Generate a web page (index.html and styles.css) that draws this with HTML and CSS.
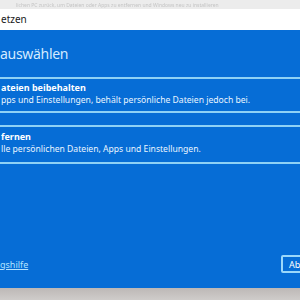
FILE: index.html
```html
<!DOCTYPE html>
<html lang="de">
<head>
  <meta charset="UTF-8" />
  <meta name="viewport" content="width=device-width, initial-scale=1.0" />
  <title>Diesen PC zurücksetzen</title>
  <link rel="stylesheet" href="styles.css">
</head>
<body>
  <div class="backdrop">
    <span>lichen PC zurück, um Dateien oder Apps zu entfernen und Windows neu zu installieren</span>
  </div>

  <div class="titlebar">etzen</div>

  <div class="dialog">
    <h1 class="heading">auswählen</h1>

    <div class="option">
      <div class="option-title">ateien beibehalten</div>
      <div class="option-text">pps und Einstellungen, behält persönliche Dateien jedoch bei.</div>
    </div>

    <div class="option">
      <div class="option-title">fernen</div>
      <div class="option-text">lle persönlichen Dateien, Apps und Einstellungen.</div>
    </div>

    <div class="dialog-footer">
      <a class="help-link" href="#">gshilfe</a>
      <button class="btn">Ab</button>
    </div>
  </div>

  <div class="desk"></div>
</body>
</html>
```

FILE: styles.css
```css
* {
  margin: 0;
  padding: 0;
  box-sizing: border-box;
}

body {
  font-family: 'Noto Sans', 'Open Sans', sans-serif;
  width: 300px;
  height: 300px;
  overflow: hidden;
  display: flex;
  flex-direction: column;
  background: #c6c2c0;
}

/* blurred window behind the dialog */
.backdrop {
  height: 9px;
  background: #ececec;
  overflow: hidden;
  white-space: nowrap;
  font-size: 5px;
  line-height: 6px;
  color: #c4c4c4;
  filter: blur(0.5px);
}

.backdrop span {
  display: block;
  margin-top: 2px;
  padding-left: 16px;
}

.titlebar {
  height: 21px;
  background: #fff;
  font-size: 10px;
  line-height: 20px;
  color: #1a1a1a;
  padding-left: 1px;
  flex-shrink: 0;
}

/* Dialog */
.dialog {
  height: 258px;
  flex-shrink: 0;
  background: #066dd6;
  display: flex;
  flex-direction: column;
  color: #fff;
}

.heading {
  font-size: 14px;
  font-weight: 400;
  letter-spacing: -0.3px;
  color: #d3eaff;
  margin: 14px 0 0 0;
  line-height: 20px;
}

.option {
  margin-top: 13px;
  border-top: 2px solid #8ed2f6;
  border-bottom: 2px solid #8ed2f6;
  padding: 3px 0 5px 1px;
}

.option + .option {
  margin-top: 12px;
  padding-top: 4px;
  padding-bottom: 7px;
}

.option-title {
  font-size: 9px;
  font-weight: 700;
  line-height: 12px;
}

.option-text {
  font-size: 8.6px;
  line-height: 12px;
  color: #eaf5ff;
}

.dialog-footer {
  margin-top: auto;
  display: flex;
  justify-content: space-between;
  align-items: center;
  padding-bottom: 15px;
}

.help-link {
  font-size: 9px;
  color: #b3e2ff;
  text-decoration: underline;
}

.btn {
  font-family: inherit;
  font-size: 9px;
  color: #fff;
  background: transparent;
  border: 2px solid #9ad8fa;
  border-radius: 2px;
  height: 18px;
  width: 30px;
  padding: 0 0 0 6px;
  text-align: left;
  margin-right: -11px;
}

.desk {
  flex: 1;
  background: linear-gradient(#bdb8b6, #cfccca);
}
```
